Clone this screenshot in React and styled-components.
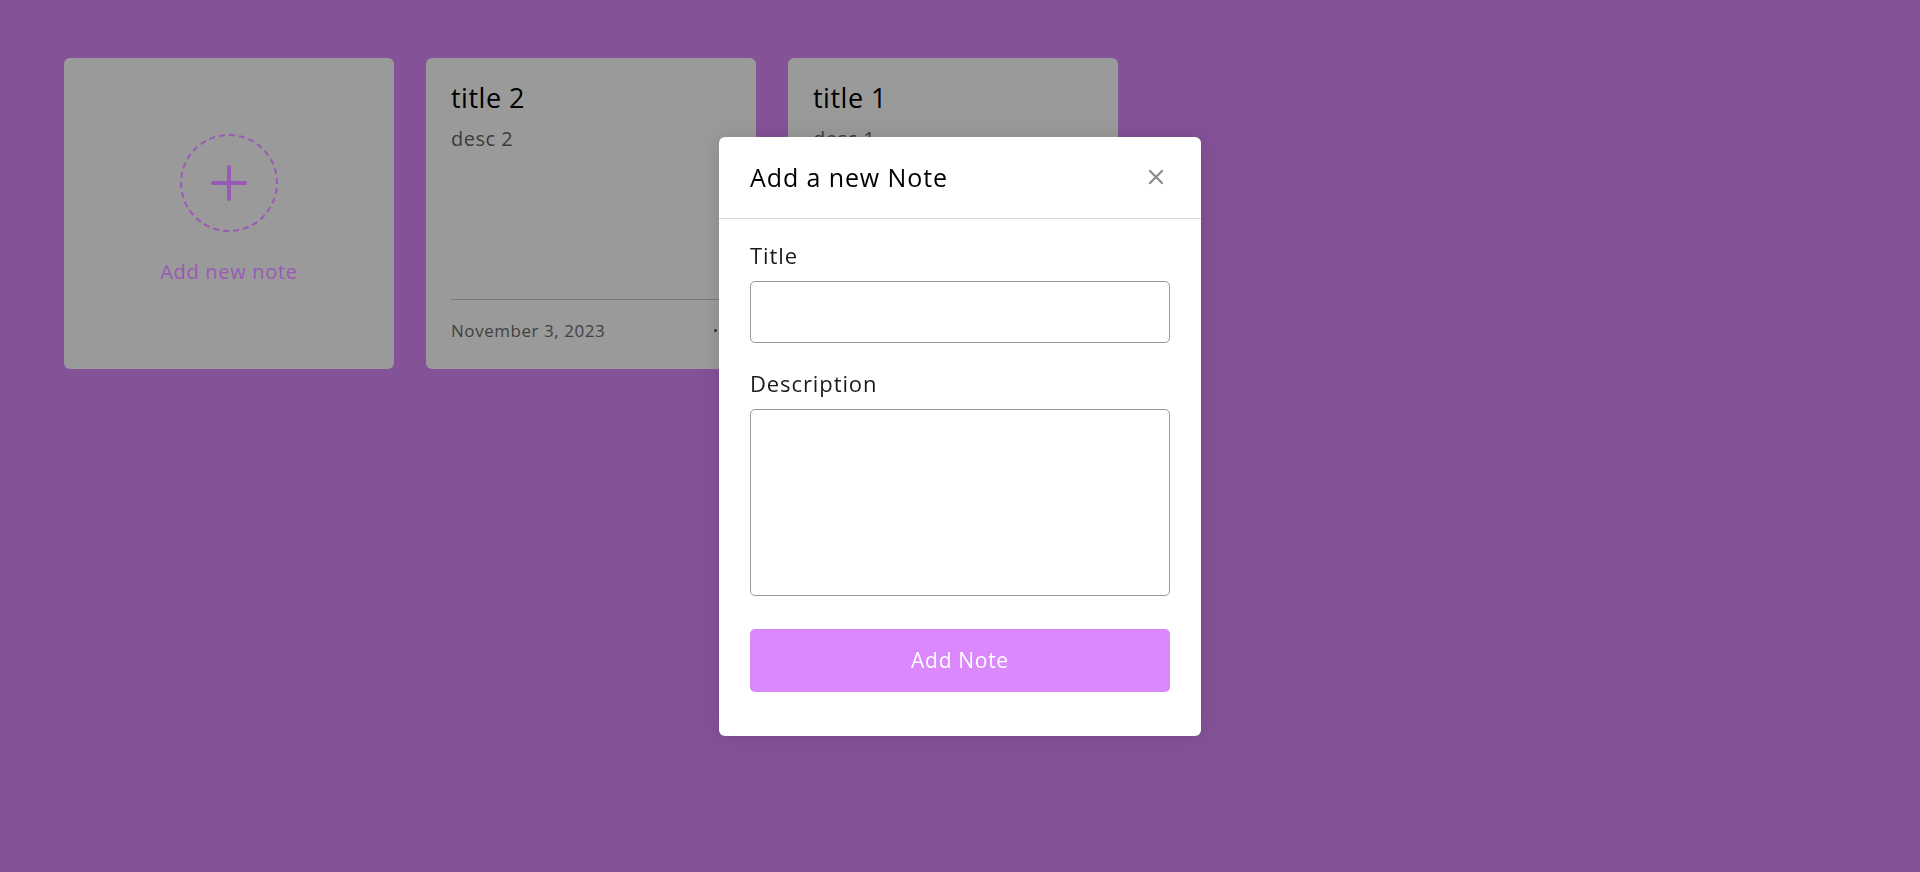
import React from "react";
import styled, { createGlobalStyle } from "styled-components";

const GlobalStyle = createGlobalStyle`
  * {
    box-sizing: border-box;
  }
  body {
    margin: 0;
    min-height: 100vh;
    background: #845297;
    font-family: "Open Sans", "Noto Sans", sans-serif;
  }
`;

const Wrapper = styled.ul`
  margin: 0;
  padding: 58px 0 0 64px;
  list-style: none;
  display: grid;
  gap: 32px;
  grid-template-columns: repeat(auto-fill, 330px);
`;

const Card = styled.li`
  height: 311px;
  border-radius: 6px;
  padding: 19px 25px 25px;
  background: #9a9a9a;
  display: flex;
  flex-direction: column;
  justify-content: ${(p) => (p.$center ? "center" : "space-between")};
  align-items: ${(p) => (p.$center ? "center" : "stretch")};
`;

const AddCircle = styled.div`
  width: 98px;
  height: 98px;
  border-radius: 50%;
  border: 2px dashed #9b59b6;
  display: flex;
  align-items: center;
  justify-content: center;
`;

const AddText = styled.p`
  margin: 25px 0 0;
  color: #9b59b6;
  font-size: 20px;
  font-weight: 500;
  line-height: 30px;
  letter-spacing: 0.7px;
`;

const NoteTitle = styled.p`
  margin: 0;
  font-size: 27px;
  font-weight: 500;
  line-height: 41px;
  letter-spacing: 0.5px;
  color: #000;
`;

const NoteDesc = styled.span`
  display: block;
  margin-top: 6px;
  font-size: 20px;
  line-height: 30px;
  letter-spacing: 0.5px;
  color: #3a3a3a;
`;

const Bottom = styled.div`
  display: flex;
  align-items: center;
  justify-content: space-between;
  border-top: 1px solid #7a7a7a;
  padding-top: 17px;
  height: 45px;
`;

const DateText = styled.span`
  font-size: 17px;
  letter-spacing: 0.55px;
  color: #414141;
`;

const Dots = styled.div`
  display: flex;
  gap: 4px;
  span {
    width: 3px;
    height: 3px;
    border-radius: 50%;
    background: #333;
  }
`;

const Backdrop = styled.div`
  position: fixed;
  inset: 0;
  display: flex;
  align-items: center;
  justify-content: center;
`;

const Modal = styled.div`
  width: 482px;
  background: #fff;
  border-radius: 6px;
  box-shadow: 0 0 19px rgba(0, 0, 0, 0.12);
`;

const Header = styled.header`
  height: 82px;
  padding: 0 31px;
  display: flex;
  align-items: center;
  justify-content: space-between;
  border-bottom: 1px solid #d6d6d6;
  p {
    margin: 0;
    font-size: 25px;
    letter-spacing: 0.9px;
    color: #000;
  }
`;

const Close = styled.button`
  width: 29px;
  height: 29px;
  border: none;
  background: none;
  padding: 0;
  display: flex;
  align-items: center;
  justify-content: center;
  cursor: pointer;
`;

const Form = styled.form`
  padding: 21px 31px 44px;
`;

const Row = styled.div`
  margin-bottom: ${(p) => p.$gap || 25}px;
`;

const Label = styled.label`
  display: block;
  font-size: 22px;
  font-weight: 400;
  line-height: 30px;
  letter-spacing: 0.9px;
  margin-bottom: 11px;
  color: #1a1a1a;
`;

const Input = styled.input`
  display: block;
  width: 100%;
  height: 62px;
  padding: 0 19px;
  font-size: 21px;
  font-family: inherit;
  border: 1px solid #9a9a9a;
  border-radius: 5px;
  outline: none;
`;

const TextArea = styled.textarea`
  display: block;
  width: 100%;
  height: 187px;
  padding: 10px 19px;
  font-size: 21px;
  font-family: inherit;
  border: 1px solid #9a9a9a;
  border-radius: 5px;
  outline: none;
  resize: none;
`;

const Submit = styled.button`
  display: block;
  width: 100%;
  height: 63px;
  border: none;
  border-radius: 5px;
  background: #da88fc;
  color: #fff;
  font-size: 21px;
  letter-spacing: 0.7px;
  font-family: inherit;
  cursor: pointer;
`;

const notes = [
  { title: "title 2", desc: "desc 2", date: "November 3, 2023" },
  { title: "title 1", desc: "desc 1", date: "November 3, 2023" },
];

export default function App() {
  return (
    <>
      <GlobalStyle />
      <Wrapper>
        <Card $center>
          <AddCircle>
            <svg width="36" height="36" viewBox="0 0 36 36">
              <path d="M18 2v32M2 18h32" stroke="#9b59b6" strokeWidth="4" strokeLinecap="round" />
            </svg>
          </AddCircle>
          <AddText>Add new note</AddText>
        </Card>
        {notes.map((n) => (
          <Card key={n.title}>
            <div>
              <NoteTitle>{n.title}</NoteTitle>
              <NoteDesc>{n.desc}</NoteDesc>
            </div>
            <Bottom>
              <DateText>{n.date}</DateText>
              <Dots>
                <span />
                <span />
                <span />
              </Dots>
            </Bottom>
          </Card>
        ))}
      </Wrapper>
      <Backdrop>
        <Modal>
          <Header>
            <p>Add a new Note</p>
            <Close type="button">
              <svg width="16" height="16" viewBox="0 0 16 16">
                <path d="M2 2l12 12M14 2L2 14" stroke="#8b8989" strokeWidth="2.2" strokeLinecap="round" />
              </svg>
            </Close>
          </Header>
          <Form onSubmit={(e) => e.preventDefault()}>
            <Row>
              <Label>Title</Label>
              <Input type="text" />
            </Row>
            <Row $gap={33}>
              <Label>Description</Label>
              <TextArea />
            </Row>
            <Submit type="submit">Add Note</Submit>
          </Form>
        </Modal>
      </Backdrop>
    </>
  );
}
